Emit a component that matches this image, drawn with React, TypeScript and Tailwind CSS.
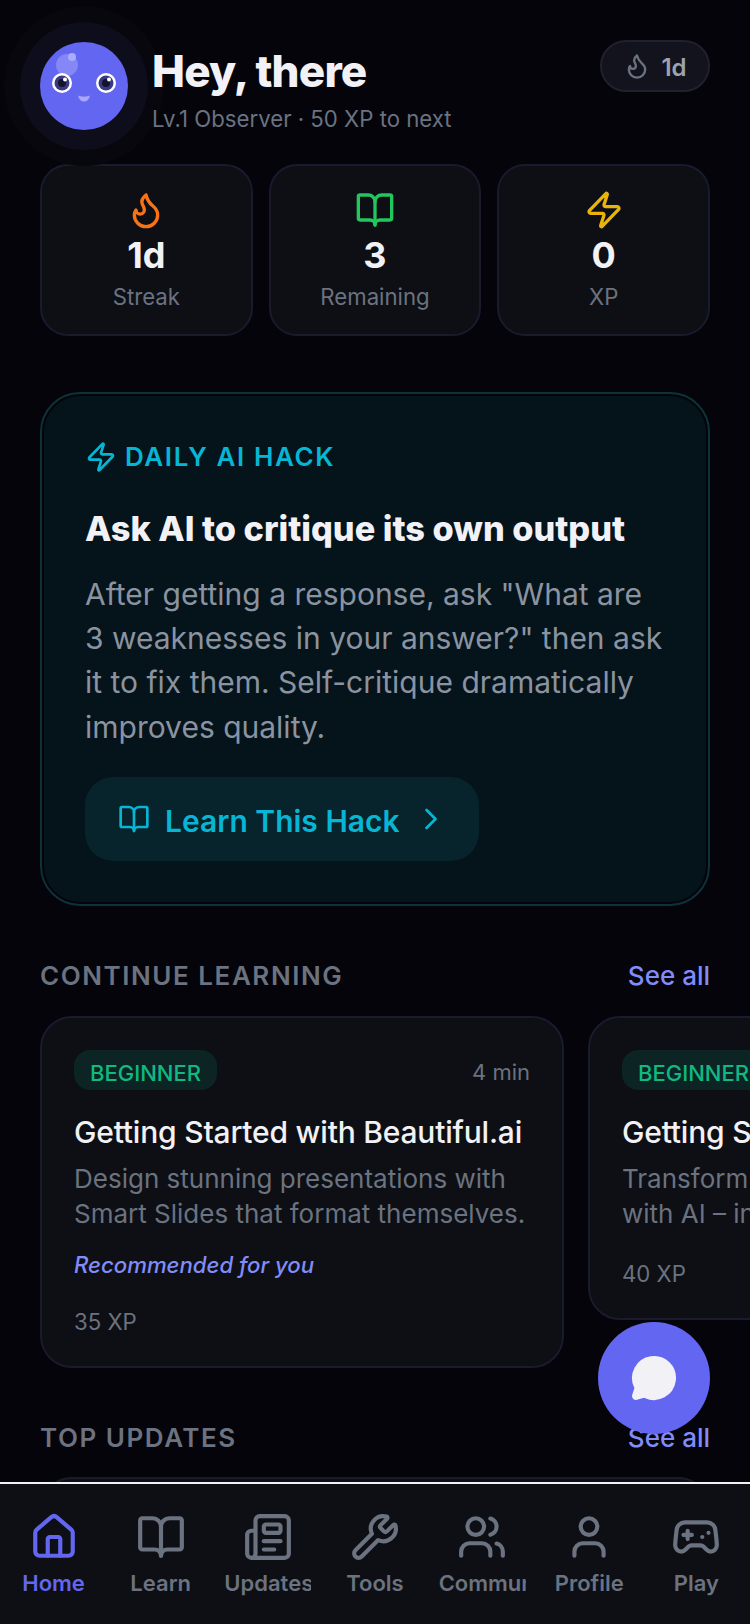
import { BookOpen, ChevronRight, Flame, Gamepad2, House, MessageCircle, Newspaper, User, Users, Wrench, Zap } from 'lucide-react'

const stats = [
  { icon: Flame, color: 'text-[#f97316]', value: '1d', label: 'Streak' },
  { icon: BookOpen, color: 'text-[#22c55e]', value: '3', label: 'Remaining' },
  { icon: Zap, color: 'text-[#eab308]', value: '0', label: 'XP' },
]

const courses = [
  {
    title: 'Getting Started with Beautiful.ai',
    description: 'Design stunning presentations with Smart Slides that format themselves.',
    minutes: '4 min',
    xp: '35 XP',
    recommended: true,
  },
  {
    title: 'Getting Started with Gamma',
    description: 'Transform rough notes into slides with AI – in seconds, not hours.',
    minutes: '3 min',
    xp: '40 XP',
    recommended: false,
  },
]

const navItems = [
  { icon: House, label: 'Home', active: true },
  { icon: BookOpen, label: 'Learn' },
  { icon: Newspaper, label: 'Updates' },
  { icon: Wrench, label: 'Tools' },
  { icon: Users, label: 'Community' },
  { icon: User, label: 'Profile' },
  { icon: Gamepad2, label: 'Play' },
]

function Avatar() {
  return (
    <div className="relative mt-[2px] h-[88px] w-[88px] shrink-0 rounded-full bg-[#6366f1] shadow-[0_0_0_20px_#0d0d1b,0_0_0_36px_#07070d]">
      <svg viewBox="0 0 88 88" className="h-[88px] w-[88px]">
        <circle cx="27" cy="23" r="11" fill="#8587f7" />
        <circle cx="32" cy="15" r="4" fill="#a9abfb" />
        <circle cx="22" cy="41" r="10" fill="#ffffff" />
        <circle cx="22" cy="41" r="7.5" fill="#3a3a80" />
        <circle cx="22" cy="41" r="4" fill="#14142e" />
        <circle cx="25" cy="37.5" r="2" fill="#ffffff" />
        <circle cx="66" cy="41" r="10" fill="#ffffff" />
        <circle cx="66" cy="41" r="7.5" fill="#3a3a80" />
        <circle cx="66" cy="41" r="4" fill="#14142e" />
        <circle cx="69" cy="37.5" r="2" fill="#ffffff" />
        <path d="M38 53.500c3 1.500 9 1.500 12 0c-1 4-3 6-6 6s-5-2-6-6z" fill="#a9a8fa" />
      </svg>
    </div>
  )
}

function Header() {
  return (
    <header className="flex items-start gap-6 px-10 pt-10">
      <Avatar />
      <div className="relative min-w-0 flex-1 pt-[3px]">
        <h1 className="text-[44px] leading-[56px] font-extrabold tracking-[-0.8px] text-[#f1f1f6]">Hey, there</h1>
        <p className="mt-[4px] text-[22.2px] leading-[32px] text-[#6b7280]">Lv.1 Observer · 50 XP to next</p>
      </div>
      <div className="flex h-[52px] w-[110px] items-center justify-center gap-[10px] rounded-full border-2 border-[#20202f] bg-[#13131d]">
        <Flame className="h-7 w-7 text-[#6b7280]" />
        <span className="pt-[3px] text-[24px] font-semibold text-[#9ca3af]">1d</span>
      </div>
    </header>
  )
}

function StatCards() {
  return (
    <div className="mt-[29px] grid grid-cols-3 gap-4 px-10">
      {stats.map((stat) => (
        <div
          key={stat.label}
          className="flex h-[172px] flex-col items-center rounded-[28px] border-2 border-[#1a1a2e] bg-[#0d0f14] pt-6"
        >
          <stat.icon className={`h-10 w-10 ${stat.color}`} />
          <p className="mt-[2px] text-[36px] leading-[46px] font-bold text-[#f1f1f6]">{stat.value}</p>
          <p className="mt-[4px] text-[22.2px] leading-[30px] text-[#6b7280]">{stat.label}</p>
        </div>
      ))}
    </div>
  )
}

function DailyHack() {
  return (
    <section className="mx-10 mt-[56px] rounded-[40px] border-2 border-[#0d3239] p-[2px]">
      <div className="rounded-[36px] bg-[#05131a] px-[41px] pt-[41px] pb-[41px]">
        <div className="flex items-center gap-[8px]">
          <Zap className="h-8 w-8 text-[#06b6d4]" />
          <span className="text-[26px] font-semibold tracking-[1.6px] text-[#06b6d4]">DAILY AI HACK</span>
        </div>
        <h2 className="mt-[31px] text-[34.3px] leading-[44px] font-extrabold text-[#f1f1f6]">Ask AI to critique its own output</h2>
        <p className="mt-[21px] text-[30px] leading-[44.2px] text-[#8b93a1]">
          After getting a response, ask "What are 3 weaknesses in your answer?" then ask it to fix them. Self-critique dramatically improves quality.
        </p>
        <button className="mt-[28px] flex h-[84px] w-[394px] items-center gap-[15px] rounded-[28px] bg-[#07232c] pl-[33px] text-[30px] font-semibold text-[#06b6d4]">
          <BookOpen className="h-8 w-8" />
          <span className="pt-[6px]">Learn This Hack</span>
          <ChevronRight className="-ml-[2px] h-9 w-9" strokeWidth={1.8} />
        </button>
      </div>
    </section>
  )
}

function SectionHead({ title }: { title: string }) {
  return (
    <div className="flex items-center justify-between px-10">
      <h3 className="text-[26px] font-semibold tracking-[1.55px] text-[#6b7280]">{title}</h3>
      <span className="text-[26px] font-medium text-[#818cf8]">See all</span>
    </div>
  )
}

function CourseCards() {
  return (
    <div className="mt-[21px] flex items-start gap-6 overflow-hidden pl-10">
      {courses.map((course) => (
        <article
          key={course.title}
          className="w-[524px] shrink-0 rounded-[32px] border-2 border-[#1a1a2e] bg-[#0d0f14] px-[32px] pt-[32px] pb-[29px]"
        >
          <div className="flex items-center justify-between">
            <span className="rounded-[16px] bg-[#0c2423] px-4 pt-[7px] pb-[1px] text-[22px] leading-[32px] font-medium text-[#10b981]">BEGINNER</span>
            <span className="pt-[6px] text-[22px] text-[#6b7280]">{course.minutes}</span>
          </div>
          <h4 className="mt-[22px] text-[30px] leading-[40px] font-medium tracking-[-0.2px] whitespace-nowrap text-[#f1f1f6]">{course.title}</h4>
          <p className="mt-[9px] text-[26px] leading-[35.5px] text-[#6b7280]">{course.description}</p>
          {course.recommended && (
            <p className="mt-[18px] text-[22.2px] leading-[30px] font-medium text-[#818cf8] italic">Recommended for you</p>
          )}
          <p className="mt-[27px] text-[22.2px] leading-[30px] text-[#6b7280]">{course.xp}</p>
        </article>
      ))}
    </div>
  )
}

function BottomNav() {
  return (
    <nav className="grid h-[142px] shrink-0 grid-cols-7 border-t-2 border-[#f1f1f6] bg-[#0d0f14] pt-[28px]">
      {navItems.map((item) => (
        <div key={item.label} className="flex min-w-0 flex-col items-center">
          <item.icon className={`h-[50px] w-[50px] ${item.active ? 'text-[#6366f1]' : 'text-[#6b7280]'}`} />
          <span
            className={`mt-[5px] w-[87px] overflow-hidden text-center text-[22px] leading-[32px] font-semibold whitespace-nowrap ${item.active ? 'text-[#6366f1]' : 'text-[#6b7280]'}`}
          >
            {item.label}
          </span>
        </div>
      ))}
    </nav>
  )
}

export default function App() {
  return (
    <div className="relative flex h-[1624px] w-[750px] flex-col overflow-hidden bg-[#04040a] font-[Inter,sans-serif]">
      <main className="min-h-0 flex-1 overflow-hidden">
        <Header />
        <StatCards />
        <DailyHack />
        <div className="mt-[50px]">
          <SectionHead title="CONTINUE LEARNING" />
          <CourseCards />
        </div>
        <div className="mt-[50px]">
          <SectionHead title="TOP UPDATES" />
          <div className="mx-10 mt-[20px] h-[120px] rounded-[32px] border-2 border-[#1a1a2e] bg-[#0d0f14]" />
        </div>
      </main>
      <BottomNav />
      <button className="absolute right-10 bottom-[190px] flex h-[112px] w-[112px] items-center justify-center rounded-full bg-[#6366f1]">
        <MessageCircle className="h-12 w-12 fill-[#f1f1f6] text-[#f1f1f6]" />
      </button>
    </div>
  )
}
